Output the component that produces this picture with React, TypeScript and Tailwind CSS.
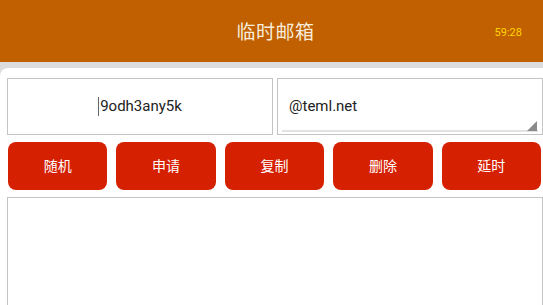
import React from 'react'

const ACTIONS = ['随机', '申请', '复制', '删除', '延时']

export default function App() {
  return (
    <div
      className="w-[543px] h-[305px] overflow-hidden flex flex-col bg-[#dcdcdc]"
      style={{ fontFamily: 'Roboto, "Noto Sans CJK SC", sans-serif' }}
    >
      {/* 标题栏 */}
      <div className="h-[62px] shrink-0 bg-[#c06000] relative flex items-center justify-center pt-[5px] pl-[8px]">
        <span className="text-[19px] text-[#f8ecdc] tracking-[0.5px]">临时邮箱</span>
        <span className="absolute right-[21px] top-[25px] text-[11px] text-[#ffd500]">59:28</span>
      </div>

      <div className="flex-1 mt-[6px] bg-white rounded-tl-[8px] pl-[7px] pt-[10px] flex flex-col">
        <div className="grid grid-cols-2 gap-[4px]">
          <div className="h-[57px] border border-[#c4c4c4] flex items-center justify-center text-[15px] text-[#222]">
            <span className="w-px h-[19px] bg-[#666] mr-[1px]" />
            9odh3any5k
          </div>
          <div className="h-[57px] border border-[#c4c4c4] relative flex items-center pl-[11px] text-[15px] text-[#222]">
            @teml.net
            <div className="absolute left-[4px] right-[4px] bottom-[2px] h-[2px] bg-[#e2e2e2]" />
            <svg className="absolute right-[5px] bottom-[3px]" width="10" height="10" viewBox="0 0 10 10">
              <polygon points="10,0 10,10 0,10" fill="#8a8a8a" />
            </svg>
          </div>
        </div>

        <div className="grid grid-cols-5 gap-[9px] pl-[1px] pr-[2px] mt-[7px]">
          {ACTIONS.map(a => (
            <button
              key={a}
              className="h-[48px] rounded-[8px] bg-[#d62002] text-white text-[14px] flex items-center justify-center"
            >
              {a}
            </button>
          ))}
        </div>

        <div className="mt-[7px] flex-1 border border-[#c4c4c4] border-b-0 bg-white" />
      </div>
    </div>
  )
}
